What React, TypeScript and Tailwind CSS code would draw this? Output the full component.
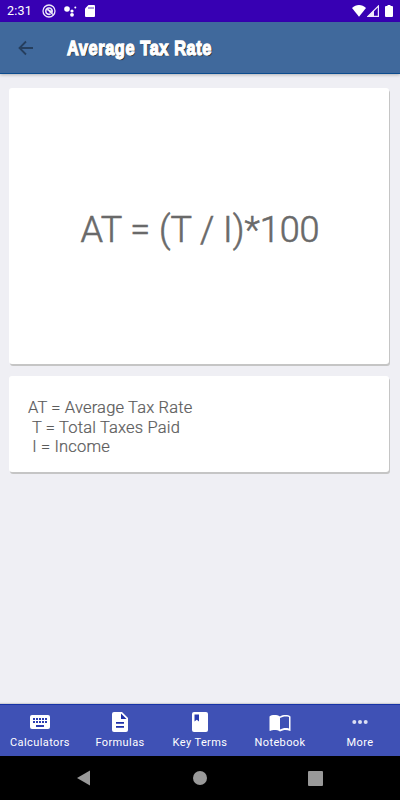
import React from 'react';

type Tab = { label: string; icon: React.ReactNode };

const tabs: Tab[] = [
    {
        label: 'Calculators',
        icon: (
            <>
                <rect x="2" y="5" width="20" height="14" rx="2" fill="#fff" />
                <path d="M5 8h2v2H5zM8 8h2v2H8zM11 8h2v2h-2zM14 8h2v2h-2zM17 8h2v2h-2zM5 11h2v2H5zM8 11h2v2H8zM11 11h2v2h-2zM14 11h2v2h-2zM17 11h2v2h-2zM8 15h8v2H8z" fill="#2a3cb0" />
            </>
        ),
    },
    {
        label: 'Formulas',
        icon: (
            <>
                <path d="M6 2h8l6 6v12a2 2 0 0 1-2 2H6a2 2 0 0 1-2-2V4a2 2 0 0 1 2-2z" fill="#fff" />
                <path d="M13 3.5V9h5.5zM8 12h8v1.7H8zM8 16h8v1.7H8z" fill="#1c2fa8" />
            </>
        ),
    },
    {
        label: 'Key Terms',
        icon: (
            <>
                <rect x="4" y="2" width="16" height="20" rx="2" fill="#fff" />
                <path d="M6.5 4.5H11v7L8.75 9.8 6.5 11.5z" fill="#2a3cb0" />
            </>
        ),
    },
    {
        label: 'Notebook',
        icon: (
            <path
                d="M12 6.5C10.4 5.4 8.5 5 6.5 5S2.6 5.4 1.5 6.5v14c0 .3.3.5.6.4C3.3 20.4 5 20 6.5 20c2 0 4 .4 5.5 1.5 1.4-.9 3.8-1.5 5.5-1.5 1.6 0 3.3.3 4.7 1 .2.2.3-.1.3-.4V6.5C21.4 5.4 19.4 5 17.5 5s-4.1.4-5.500 1.5zM21 18.5c-1.1-.4-2.3-.5-3.5-.5-1.7 0-4.1.6-5.5 1.5V8c1.400-.9 3.8-1.5 5.500-1.5 1.2 0 2.4.1 3.5.5z"
                fill="#fff"
            />
        ),
    },
    {
        label: 'More',
        icon: (
            <g fill="#dcdff3">
                <circle cx="6.3" cy="12" r="2" />
                <circle cx="12" cy="12" r="2" />
                <circle cx="17.7" cy="12" r="2" />
            </g>
        ),
    },
];

const StatusBar: React.FC = () => (
    <div className="flex h-[22px] items-center justify-between bg-[#3700b3] pl-[7px] pr-[7px] text-white">
        <div className="flex items-center">
            <span className="w-[35px] text-[12.5px] tracking-[0.2px]">2:31</span>
            <svg className="h-[14px] w-[14px]" viewBox="0 0 14 14" fill="none" stroke="#eee9fa" strokeWidth="1.3">
                <circle cx="7" cy="7" r="6" />
                <path d="M8.5 10A3.2 3.2 0 1 1 10 8.3L5.5 5.5" strokeWidth="1.6" />
                <path d="M7 7.3l4 3.2" strokeWidth="1.4" />
            </svg>
            <svg className="ml-2 h-[14px] w-[14px]" viewBox="0 0 14 14" fill="#fff">
                <circle cx="3" cy="5" r="2.8" />
                <circle cx="8" cy="7" r="1.6" />
                <circle cx="11.3" cy="3.6" r="1" />
                <circle cx="8" cy="10.8" r="1.9" />
            </svg>
            <svg className="ml-[7px] h-3 w-[10px]" viewBox="0 0 10 12">
                <path d="M3.5 0H9a1 1 0 0 1 1 1v10a1 1 0 0 1-1 1H1a1 1 0 0 1-1-1V3.5z" fill="#fff" />
                <path d="M4 2v2M6 2v2M8 2v2" stroke="#3700b3" strokeWidth=".8" />
            </svg>
        </div>
        <div className="flex items-center">
            <svg className="h-3 w-[14px]" viewBox="0 0 14 12">
                <path d="M0 3C4-.9 10-.9 14 3L7 11.7z" fill="#fff" />
            </svg>
            <svg className="ml-[1px] h-3 w-3" viewBox="0 0 12 12">
                <path d="M11.4 1v10.4H1z" fill="none" stroke="#eee9fa" strokeWidth="1.2" />
                <path d="M0 12L7 5v7z" fill="#eee9fa" />
            </svg>
            <svg className="ml-[6px] h-3 w-2" viewBox="0 0 8 12">
                <path d="M2.5 0h3v1H7a1 1 0 0 1 1 1v9a1 1 0 0 1-1 1H1a1 1 0 0 1-1-1V2a1 1 0 0 1 1-1h1.5z" fill="#fff" />
            </svg>
        </div>
    </div>
);

const Header: React.FC = () => (
    <header className="flex h-[52px] items-center border-b border-[#0c4c8e] bg-[#40699c] pl-[18px] shadow-[0_1px_3px_rgba(0,0,0,0.25)]">
        <svg className="h-4 w-4" viewBox="0 0 16 16" fill="none" stroke="#263f5e" strokeWidth="1.8">
            <path d="M15 8H2M8 1.5L1.5 8 8 14.5" />
        </svg>
        <h1 className="ml-[33px] origin-left scale-x-[0.84] whitespace-nowrap font-['Liberation_Sans'] text-[19.5px] font-bold leading-6 tracking-[0.7px] text-white [-webkit-text-stroke:1.3px_white] [text-shadow:1px_1px_1px_#111]">
            Average Tax Rate
        </h1>
    </header>
);

const App: React.FC = () => (
    <div className="flex h-[800px] w-[400px] flex-col overflow-hidden bg-[#efeff4] font-[Roboto,sans-serif]">
        <StatusBar />
        <Header />

        <main className="flex flex-1 flex-col gap-3 pl-[9px] pr-[11px] pt-[14px]">
            <section className="flex h-[276px] items-center justify-center rounded-[3px] bg-white pl-[2px] pt-[8px] text-[36px] font-light text-[#696969] shadow-[1px_2px_0_#c5c5c5] [-webkit-text-stroke:0.6px_#696969]">
                <span className="whitespace-nowrap">AT = (T / I)*100</span>
            </section>
            <section className="h-[96px] whitespace-pre rounded-[3px] bg-white pl-[19px] pt-[22px] text-[16.5px] font-light leading-[19.5px] tracking-[0.18px] text-[#5c5c5c] shadow-[1px_2px_0_#c5c5c5] [-webkit-text-stroke:0.2px_#5c5c5c]">
                {'AT = Average Tax Rate\n T = Total Taxes Paid\n I = Income'}
            </section>
        </main>

        <nav className="grid h-[52px] grid-cols-5 border-t border-[#1733a6] bg-[#3f51b5] shadow-[0_-1px_1px_#d0d0d5]">
            {tabs.map((tab) => (
                <div key={tab.label} className="flex flex-col items-center pt-[5px] text-[11px] leading-[18px] tracking-[0.4px] text-white">
                    <svg className="h-6 w-6" viewBox="0 0 24 24">
                        {tab.icon}
                    </svg>
                    <span className="whitespace-nowrap">{tab.label}</span>
                </div>
            ))}
        </nav>

        <div className="flex h-11 items-center bg-black pl-[77px]">
            <svg className="h-4 w-[13px]" viewBox="0 0 13 16">
                <path d="M13 .5v15L0 8z" fill="#999" />
            </svg>
            <div className="ml-[103px] h-[14px] w-[14px] rounded-full bg-[#999]" />
            <div className="ml-[101px] h-[15px] w-[15px] rounded-[1px] bg-[#999]" />
        </div>
    </div>
);

export default App;
